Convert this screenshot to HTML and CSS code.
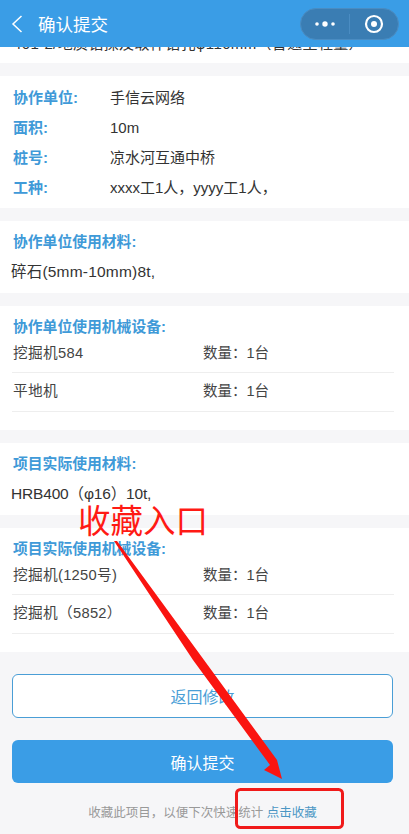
FILE: index.html
```html
<!DOCTYPE html>
<html>
    <head>
        <title>确认提交</title>
        <meta charset="UTF-8">
        <meta name="viewport" content="width=device-width, initial-scale=1.0">
        <link rel="stylesheet" href="styles.css">
    </head>
    <body>
        <header class="nav-bar">
            <svg class="nav-back" width="12" height="18" viewBox="0 0 12 18">
                <path d="M10.5 1 L2 9 L10.5 17" fill="none" stroke="#fff" stroke-width="1.5"/>
            </svg>
            <span class="nav-title">确认提交</span>
            <div class="capsule">
                <div class="capsule-part">
                    <svg width="22" height="8" viewBox="0 0 22 8">
                        <circle cx="3" cy="4" r="1.8" fill="#fff"/>
                        <circle cx="11" cy="4" r="2.7" fill="#fff"/>
                        <circle cx="19" cy="4" r="1.8" fill="#fff"/>
                    </svg>
                </div>
                <div class="capsule-part capsule-right">
                    <svg width="20" height="20" viewBox="0 0 20 20">
                        <circle cx="10" cy="10" r="8" fill="none" stroke="#fff" stroke-width="2.2"/>
                        <circle cx="10" cy="10" r="3" fill="#fff"/>
                    </svg>
                </div>
            </div>
        </header>

        <div class="clipped-row">
            <span class="clipped-text">401-2/地质钻探及取样钻孔φ110mm（普通工程量）</span>
        </div>

        <section class="card info-card">
            <div class="info-row"><span class="info-label">协作单位:</span><span>手信云网络</span></div>
            <div class="info-row"><span class="info-label">面积:</span><span>10m</span></div>
            <div class="info-row"><span class="info-label">桩号:</span><span>凉水河互通中桥</span></div>
            <div class="info-row"><span class="info-label">工种:</span><span>xxxx工1人，yyyy工1人，</span></div>
        </section>

        <section class="card">
            <h3 class="card-title">协作单位使用材料:</h3>
            <p class="material">碎石(5mm-10mm)8t,</p>
        </section>

        <section class="card">
            <h3 class="card-title">协作单位使用机械设备:</h3>
            <div class="machine-row"><span class="machine-name">挖掘机584</span><span>数量：1台</span></div>
            <div class="machine-row"><span class="machine-name">平地机</span><span>数量：1台</span></div>
            <div class="card-end"></div>
        </section>

        <section class="card">
            <h3 class="card-title">项目实际使用材料:</h3>
            <p class="material material-tight">HRB400（φ16）10t,</p>
        </section>

        <section class="card">
            <h3 class="card-title">项目实际使用机械设备:</h3>
            <div class="machine-row"><span class="machine-name">挖掘机(1250号)</span><span>数量：1台</span></div>
            <div class="machine-row"><span class="machine-name">挖掘机（5852）</span><span>数量：1台</span></div>
            <div class="card-end"></div>
        </section>

        <div class="actions">
            <button class="btn btn-outline">返回修改</button>
            <button class="btn btn-primary">确认提交</button>
            <p class="favorite">收藏此项目，以便下次快速统计 <a>点击收藏</a></p>
        </div>

        <div class="mark-label">收藏入口</div>
        <svg class="mark-layer" width="409" height="834" viewBox="0 0 409 834">
            <polygon points="114,541 117,541 204,660 277,760 282,779 264,770 270,765 193,660" fill="#fa1410"/>
            <rect x="236.5" y="789.5" width="106" height="38" rx="4" fill="none" stroke="#f01a1a" stroke-width="3"/>
        </svg>
    </body>
</html>
```

FILE: styles.css
```css
:root {
    --blue: #3a9de6;
    --title-blue: #3f9ad8;
    --text-color: #333;
    --page-bg: #f6f6f8;
}

* {
    box-sizing: border-box;
    margin: 0;
    padding: 0;
    font-family: "Liberation Sans", "Noto Sans CJK SC", sans-serif;
}

body {
    position: relative;
    width: 409px;
    height: 834px;
    overflow: hidden;
    background: var(--page-bg);
    color: var(--text-color);
    font-size: 14.5px;
}

.nav-bar {
    display: flex;
    align-items: center;
    height: 47px;
    padding: 0 10px 0 11px;
    background: var(--blue);
    color: #fff;
}

.nav-back {
    margin-right: 15px;
}

.nav-title {
    flex: 1;
    font-size: 17.5px;
}

.capsule {
    display: flex;
    align-items: center;
    width: 99px;
    height: 32px;
    border-radius: 16px;
    background: #3a7db3;
    border: 1px solid #4a8cc2;
}

.capsule-part {
    display: flex;
    flex: 1;
    justify-content: center;
    align-items: center;
    height: 20px;
}

.capsule-right {
    border-left: 1px solid #4a8cc2;
}

.clipped-row {
    height: 16px;
    padding: 0 13px;
    overflow: hidden;
    background: #fff;
    font-size: 15px;
    letter-spacing: 0.35px;
    white-space: nowrap;
}

.clipped-text {
    display: block;
    margin-top: -13px;
    line-height: 20px;
}

.card {
    margin-top: 13px;
    padding: 0 15px 0 13px;
    background: #fff;
}

.info-card {
    height: 132px;
    padding-top: 7px;
}

.info-row {
    display: flex;
    height: 30px;
    align-items: baseline;
    font-size: 15px;
    line-height: 30px;
}

.info-row span:last-child {
    margin-left: -1px;
}

.info-label {
    width: 98px;
    color: var(--title-blue);
    font-weight: 700;
}

.card-title {
    padding-top: 11px;
    height: 41px;
    color: var(--title-blue);
    font-size: 14.8px;
    font-weight: 700;
    line-height: 20px;
}

.material {
    height: 31px;
    margin-left: -2px;
    font-size: 15.5px;
    letter-spacing: 0.2px;
    line-height: 20px;
}

.material-tight {
    letter-spacing: -0.17px;
}

.machine-row {
    display: flex;
    align-items: baseline;
    height: 39px;
    border-bottom: 1px solid #eee;
    margin-left: -1px;
    color: #444;
    line-height: 36px;
}

.card-title + .machine-row {
    height: 40px;
    margin-top: -14px;
    line-height: 40px;
}

.machine-name {
    width: 191px;
    padding-left: 1px;
    font-size: 14.7px;
    letter-spacing: 0.3px;
}

.card-end {
    height: 18px;
}

.actions {
    display: flex;
    flex-direction: column;
    padding: 22px 16px 0 12px;
}

.btn {
    height: 44px;
    border-radius: 6px;
    font-size: 16px;
}

.btn-outline {
    background: #fff;
    border: 1px solid #4a9ed6;
    color: #4a9ed6;
}

.btn-primary {
    height: 43px;
    margin-top: 22px;
    background: var(--blue);
    border: none;
    color: #fff;
}

.favorite {
    margin-top: 21px;
    color: #999;
    font-size: 12.5px;
    line-height: 18px;
    text-align: center;
}

.favorite a {
    color: #4b96c4;
}

/* red annotation drawn on top of the screen */
.mark-label {
    position: absolute;
    left: 78px;
    top: 501px;
    color: #ff1a14;
    font-size: 32.5px;
    line-height: 42px;
}

.mark-layer {
    position: absolute;
    left: 0;
    top: 0;
}
```
